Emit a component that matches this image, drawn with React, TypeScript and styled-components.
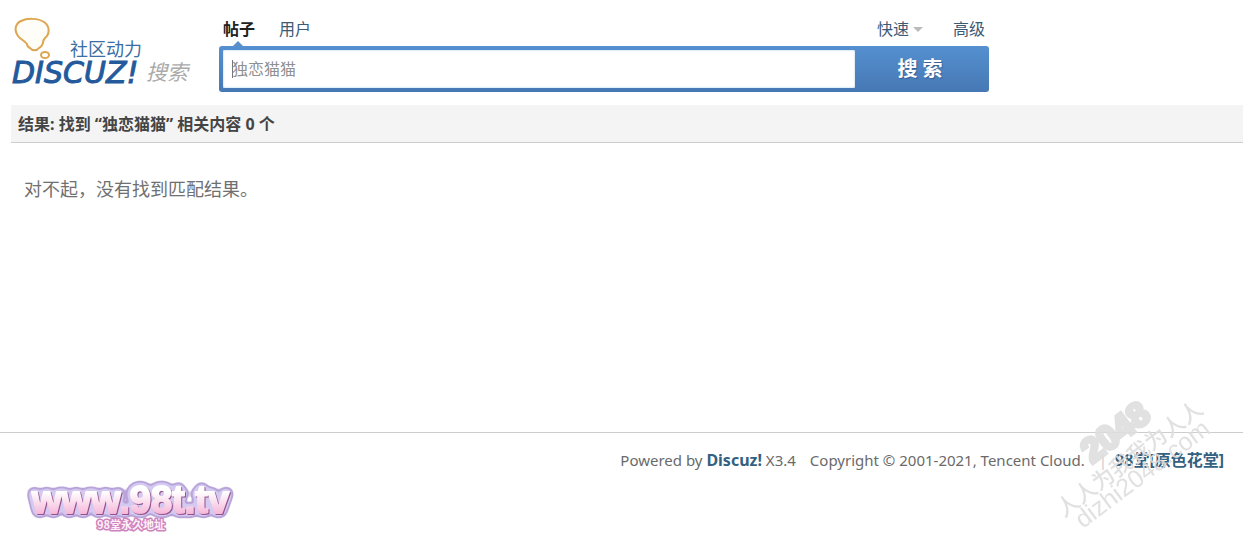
import React from "react";
import styled, { createGlobalStyle } from "styled-components";

const GlobalStyle = createGlobalStyle`
  * { box-sizing: border-box; }
  body {
    margin: 0;
    background: #fff;
    color: #444;
    font: 16px/20px "Noto Sans", "Noto Sans CJK SC", sans-serif;
  }
  a { color: #336699; text-decoration: none; }
  a:hover { text-decoration: underline; }
`;

const Page = styled.div`
  position: relative;
  overflow: hidden;
`;

const Header = styled.header`
  display: flex;
  gap: 24px;
  padding: 16px 12px 13px;
`;

const LogoLink = styled.a`
  flex: none;
  width: 183px;
  height: 72px;
  svg { display: block; overflow: visible; }
`;

const SearchForm = styled.form`
  flex: 0 1 770px;
  display: flex;
  flex-direction: column;
`;

const Tabs = styled.nav`
  display: flex;
  align-items: center;
  height: 30px;
  padding: 0 4px 4px;
  gap: 24px;
`;

const Tab = styled.a<{ $active?: boolean }>`
  position: relative;
  color: ${(p) => (p.$active ? "#222" : "#3d5a75")};
  font-weight: ${(p) => (p.$active ? 700 : 400)};
  &::after {
    content: "";
    display: ${(p) => (p.$active ? "block" : "none")};
    position: absolute;
    left: 10px;
    top: 22px;
    border: 5px solid transparent;
    border-top: 0;
    border-bottom-color: #5b8ecb;
  }
`;

const TabLinks = styled.div`
  display: flex;
  gap: 30px;
  margin-left: auto;
`;

const QuickLink = styled(Tab)`
  display: flex;
  align-items: center;
  gap: 4px;
  svg { display: block; }
`;

const SearchBar = styled.div`
  display: flex;
  height: 46px;
  padding: 4px 0 4px 4px;
  border-radius: 3px;
  background: linear-gradient(#5590d0, #4678b4);
`;

const SearchInput = styled.input`
  flex: 1;
  min-width: 0;
  padding: 0 9px;
  border: 0;
  border-radius: 1px;
  outline: 0;
  box-shadow: inset 0 0 2px #8fc0e6;
  background: linear-gradient(#777, #777) 9px 10px / 1px 18px no-repeat, #fff;
  color: #666;
  font: 16px "Noto Sans", "Noto Sans CJK SC", sans-serif;
  &::placeholder { color: #8f8f8f; opacity: 1; }
`;

const SearchButton = styled.button`
  width: 134px;
  padding: 0 4px 3px 0;
  border: 0;
  background: transparent;
  color: #fff;
  font: 700 20px "Noto Sans", "Noto Sans CJK SC", sans-serif;
  text-shadow: 1px 1px 1px #335f94;
  cursor: pointer;
`;

const Results = styled.main`
  min-height: 327px;
  padding-left: 11px;
`;

const ResultTitle = styled.h1`
  margin: 0;
  padding: 9px 7px 8px;
  border-bottom: 1px solid #cdcdcd;
  background: #f4f4f4;
  color: #444;
  font-size: 16px;
  line-height: 20px;
`;

const EmptyMessage = styled.p`
  margin: 0;
  padding: 34px 13px;
  color: #707070;
  font-size: 18px;
  line-height: 24px;
`;

const Footer = styled.footer`
  padding: 17px 19px 0 24px;
  border-top: 1px solid #cdcdcd;
`;

const Copyright = styled.p`
  display: flex;
  justify-content: flex-end;
  gap: 14px;
  margin: 0;
  color: #6a6a6a;
  font-size: 15px;
  line-height: 20px;
  a { color: #33617f; font-size: 16px; font-weight: 700; }
`;

const SiteLink = styled.span`
  &::before {
    content: "|";
    margin-right: 8px;
    color: #ccc;
  }
`;

const BannerLink = styled.a`
  display: block;
  width: 216px;
  margin-top: 6px;
  svg { display: block; overflow: visible; }
`;

const Watermark = styled.svg`
  position: absolute;
  right: 23px;
  top: 392px;
  overflow: visible;
  pointer-events: none;
`;

const cjk = '"Noto Sans CJK SC", sans-serif';

function Logo() {
  return (
    <svg width="183" height="72" role="img" aria-label="Discuz! 搜索">
      <path
        d="M15 28C12 24 9 24 6 20C2 14 3 8 9 5C15 2 26 2 32 6C38 10 38 18 33 22C31 24 31 25 31 27C30 31 28 31 27 32C25 35 20 35 18 32C16 31 15 30 15 28Z"
        fill="#fffdf7"
        stroke="#dda650"
        strokeWidth="2"
      />
      <ellipse cx="33" cy="39" rx="4" ry="3" fill="#fff" stroke="#dda650" strokeWidth="2" />
      <text x="58" y="40" fontFamily={cjk} fontSize="18" fill="#3a6ea5">社区动力</text>
      <text
        x="0"
        y="67"
        fontFamily="DejaVu Sans"
        fontStyle="italic"
        fontSize="30"
        fill="#245a9b"
        stroke="#245a9b"
        strokeWidth="1"
      >
        DISCUZ!
      </text>
      <text x="134" y="64" fontFamily={cjk} fontStyle="italic" fontSize="21" fill="#aaa">搜索</text>
    </svg>
  );
}

function Banner() {
  return (
    <svg width="216" height="58" role="img" aria-label="www.98t.tv 98堂永久地址">
      <defs>
        <linearGradient id="pink" x1="0" y1="0" x2="0" y2="1">
          <stop offset="0.3" stopColor="#fff" />
          <stop offset="0.85" stopColor="#f5b5d8" />
        </linearGradient>
        <filter id="rim" x="-10%" y="-30%" width="120%" height="160%" colorInterpolationFilters="sRGB">
          <feOffset in="SourceAlpha" dx="1" dy="1" result="shade" />
          <feFlood floodColor="#95508c" />
          <feComposite in2="shade" operator="in" result="dark" />
          <feGaussianBlur in="SourceAlpha" stdDeviation="3" />
          <feComponentTransfer result="wide">
            <feFuncA type="linear" slope="12" intercept="-1.8" />
          </feComponentTransfer>
          <feFlood floodColor="#d3c9f1" />
          <feComposite in2="wide" operator="in" result="lilac" />
          <feGaussianBlur in="SourceAlpha" stdDeviation="3" />
          <feComponentTransfer result="wider">
            <feFuncA type="linear" slope="20" intercept="-1" />
          </feComponentTransfer>
          <feFlood floodColor="#b8a3d8" />
          <feComposite in2="wider" operator="in" result="outline" />
          <feMerge>
            <feMergeNode in="outline" />
            <feMergeNode in="lilac" />
            <feMergeNode in="dark" />
            <feMergeNode in="SourceGraphic" />
          </feMerge>
        </filter>
      </defs>
      <text
        x="8"
        y="37"
        fontFamily="Liberation Sans"
        fontWeight="700"
        fontSize="38"
        filter="url(#rim)"
        fill="url(#pink)"
        stroke="url(#pink)"
        strokeWidth="2"
        strokeLinejoin="round"
      >
        www.98t.tv
      </text>
      <text
        x="73"
        y="53"
        fontFamily={cjk}
        fontWeight="700"
        fontSize="11"
        fill="#fff0fa"
        stroke="#cf83bd"
        strokeWidth="3"
        strokeLinejoin="round"
        paintOrder="stroke"
      >
        98堂永久地址
      </text>
    </svg>
  );
}

export default function App() {
  return (
    <>
      <GlobalStyle />
      <Page>
        <Header>
          <LogoLink href="#"><Logo /></LogoLink>
          <SearchForm onSubmit={(e) => e.preventDefault()}>
            <Tabs>
              <Tab href="#" $active>帖子</Tab>
              <Tab href="#">用户</Tab>
              <TabLinks>
                <QuickLink href="#">
                  快速
                  <svg width="10" height="5"><path d="M0 0H10L5 5Z" fill="#bbb" /></svg>
                </QuickLink>
                <Tab href="#">高级</Tab>
              </TabLinks>
            </Tabs>
            <SearchBar>
              <SearchInput type="text" aria-label="搜索" placeholder="独恋猫猫" />
              <SearchButton type="submit">搜 索</SearchButton>
            </SearchBar>
          </SearchForm>
        </Header>
        <Results>
          <ResultTitle>结果: 找到 “独恋猫猫” 相关内容 0 个</ResultTitle>
          <EmptyMessage>对不起，没有找到匹配结果。</EmptyMessage>
        </Results>
        <Footer>
          <Copyright>
            <span>Powered by <a href="#">Discuz!</a> X3.4</span>
            <span>Copyright © 2001-2021, Tencent Cloud.</span>
            <SiteLink><a href="#">98堂[原色花堂]</a></SiteLink>
          </Copyright>
          <BannerLink href="#"><Banner /></BannerLink>
        </Footer>
        <Watermark width="170" height="148" aria-hidden="true">
          <g fill="#dedede" stroke="#dedede" opacity="0.9">
            <text
              transform="translate(42 72) rotate(-37)"
              fontFamily="Liberation Sans"
              fontWeight="700"
              fontSize="34"
              strokeWidth="4"
            >
              2048
            </text>
            <text
              transform="translate(14 126) rotate(-37)"
              fontFamily={cjk}
              fontWeight="500"
              fontSize="22"
              strokeWidth="0"
            >
              人人为我我为人人
            </text>
            <text
              transform="translate(33 137) rotate(-37)"
              fontFamily="Liberation Sans"
              fontSize="25"
              strokeWidth="0"
            >
              dizhi2048.com
            </text>
          </g>
        </Watermark>
      </Page>
    </>
  );
}
